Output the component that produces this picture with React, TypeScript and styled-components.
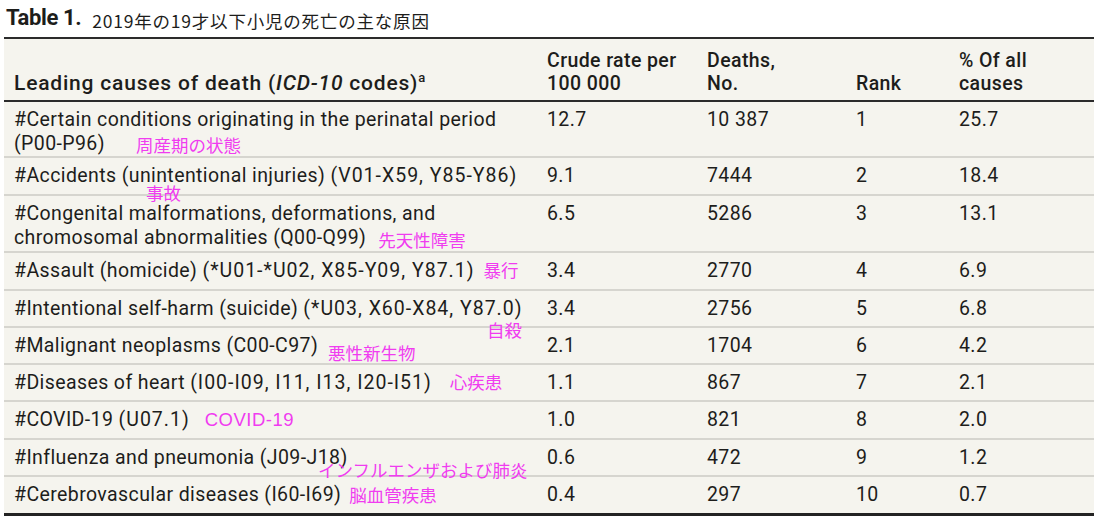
import styled, { createGlobalStyle } from 'styled-components';

const GlobalStyle = createGlobalStyle`
  html, body {
    margin: 0;
    padding: 0;
    background: #ffffff;
  }
  body {
    font-family: Roboto, "Noto Sans CJK JP", sans-serif;
    color: #1d1d1b;
  }
`;

const Page = styled.div`
  width: 1096px;
  height: 519px;
  padding: 0 2px 0 4px;
  box-sizing: border-box;
  overflow: hidden;
`;

const Caption = styled.div`
  display: flex;
  align-items: flex-start;
  gap: 11px;
  height: 37px;
  padding-top: 6px;
  padding-left: 2px;
  box-sizing: border-box;
`;

const CaptionLabel = styled.span`
  font-family: Roboto, sans-serif;
  font-size: 22px;
  line-height: 24px;
  font-weight: 700;
  letter-spacing: -0.4px;
`;

const CaptionText = styled.span`
  margin-top: 3px;
  font-family: "Noto Sans CJK JP", sans-serif;
  font-size: 17.5px;
  line-height: 24px;
  letter-spacing: 0.8px;
`;

const Table = styled.table`
  width: 1090px;
  border-collapse: collapse;
  table-layout: fixed;
  background: #f5f4ee;
  border-top: 2px solid #2b2b2b;
  border-bottom: 3px solid #232323;
  font-size: 19.5px;
  letter-spacing: 0.4px;
`;

const HeadCell = styled.th<{ $w: number; $lead?: boolean }>`
  width: ${p => p.$w}px;
  text-align: left;
  vertical-align: bottom;
  font-weight: 500;
  font-size: ${p => (p.$lead ? 21 : 19.5)}px;
  letter-spacing: ${p => (p.$lead ? 0.8 : 0.4)}px;
  line-height: 23px;
  padding: 10px 10px 5px;
  border-bottom: 2px solid #2b2b2b;
`;

const Row = styled.tr<{ $h: number }>`
  height: ${p => p.$h}px;
  border-top: 2px solid #d6d5cf;

  &:first-child {
    border-top: none;
  }
`;

const Cell = styled.td`
  position: relative;
  vertical-align: top;
  line-height: 23.5px;
  padding: 6px 10px 0;
  white-space: nowrap;
`;

const CodeList = styled.span`
  letter-spacing: 1px;
`;

const Note = styled.span<{ $gap: number; $drop?: number }>`
  display: inline-block;
  margin-left: ${p => p.$gap}px;
  transform: translateY(${p => p.$drop ?? 0}px);
  font-family: "Noto Sans CJK JP", sans-serif;
  font-size: 17.5px;
  line-height: 20px;
  letter-spacing: 0;
  color: #f03cf0;
`;

const LatinNote = styled(Note)`
  font-family: "Liberation Sans", Arial, sans-serif;
  font-size: 18.5px;
  letter-spacing: 0.5px;
`;

const FloatNote = styled.span<{ $left: number; $top: number }>`
  position: absolute;
  left: ${p => p.$left}px;
  top: ${p => p.$top}px;
  font-family: "Noto Sans CJK JP", sans-serif;
  font-size: 17.5px;
  line-height: 20px;
  letter-spacing: 0;
  color: #f03cf0;
  white-space: nowrap;
`;

const Sup = styled.sup`
  font-size: 13px;
  line-height: 0;
  vertical-align: 8px;
`;

interface Cause {
  label: React.ReactNode;
  rate: string;
  deaths: string;
  rank: string;
  share: string;
  h: number;
}

const causes: Cause[] = [
  {
    label: (
      <>
        #Certain conditions originating in the perinatal period
        <br />
        (P00-P96)
        <Note $gap={31} $drop={2}>周産期の状態</Note>
      </>
    ),
    rate: '12.7',
    deaths: '10 387',
    rank: '1',
    share: '25.7',
    h: 56,
  },
  {
    label: (
      <>
        #Accidents (unintentional injuries) <CodeList>(V01-X59, Y85-Y86)</CodeList>
        <FloatNote $left={142} $top={25}>事故</FloatNote>
      </>
    ),
    rate: '9.1',
    deaths: '7444',
    rank: '2',
    share: '18.4',
    h: 38,
  },
  {
    label: (
      <>
        #Congenital malformations, deformations, and
        <br />
        chromosomal abnormalities (Q00-Q99)
        <Note $gap={12} $drop={3}>先天性障害</Note>
      </>
    ),
    rate: '6.5',
    deaths: '5286',
    rank: '3',
    share: '13.1',
    h: 57,
  },
  {
    label: (
      <>
        #Assault (homicide) <CodeList>(*U01-*U02, X85-Y09, Y87.1)</CodeList>
        <Note $gap={9}>暴行</Note>
      </>
    ),
    rate: '3.4',
    deaths: '2770',
    rank: '4',
    share: '6.9',
    h: 38,
  },
  {
    label: (
      <>
        #Intentional self-harm (suicide) <CodeList>(*U03, X60-X84, Y87.0)</CodeList>
        <FloatNote $left={483} $top={29}>自殺</FloatNote>
      </>
    ),
    rate: '3.4',
    deaths: '2756',
    rank: '5',
    share: '6.8',
    h: 37,
  },
  {
    label: (
      <>
        #Malignant neoplasms (C00-C97)
        <Note $gap={10} $drop={8}>悪性新生物</Note>
      </>
    ),
    rate: '2.1',
    deaths: '1704',
    rank: '6',
    share: '4.2',
    h: 37,
  },
  {
    label: (
      <>
        #Diseases of heart <CodeList>(I00-I09, I11, I13, I20-I51)</CodeList>
        <Note $gap={18}>心疾患</Note>
      </>
    ),
    rate: '1.1',
    deaths: '867',
    rank: '7',
    share: '2.1',
    h: 37,
  },
  {
    label: (
      <>
        #COVID-19 <CodeList>(U07.1)</CodeList>
        <LatinNote $gap={15}>COVID-19</LatinNote>
      </>
    ),
    rate: '1.0',
    deaths: '821',
    rank: '8',
    share: '2.0',
    h: 38,
  },
  {
    label: (
      <>
        #Influenza and pneumonia (J09-J18)
        <FloatNote $left={314} $top={20}>インフルエンザおよび肺炎</FloatNote>
      </>
    ),
    rate: '0.6',
    deaths: '472',
    rank: '9',
    share: '1.2',
    h: 37,
  },
  {
    label: (
      <>
        #Cerebrovascular diseases (I60-I69)
        <Note $gap={8} $drop={1}>脳血管疾患</Note>
      </>
    ),
    rate: '0.4',
    deaths: '297',
    rank: '10',
    share: '0.7',
    h: 38,
  },
];

const App = () => {
  return (
    <Page>
      <GlobalStyle />
      <Caption>
        <CaptionLabel>Table 1.</CaptionLabel>
        <CaptionText>2019年の19才以下小児の死亡の主な原因</CaptionText>
      </Caption>
      <Table>
        <thead>
          <tr>
            <HeadCell $w={513} $lead>
              Leading causes of death (<i>ICD-10</i> codes)<Sup>a</Sup>
            </HeadCell>
            <HeadCell $w={140}>
              Crude rate per
              <br />
              100 000
            </HeadCell>
            <HeadCell $w={129}>
              Deaths,
              <br />
              No.
            </HeadCell>
            <HeadCell $w={83}>Rank</HeadCell>
            <HeadCell $w={125}>
              % Of all
              <br />
              causes
            </HeadCell>
          </tr>
        </thead>
        <tbody>
          {causes.map((c, i) => (
            <Row key={i} $h={c.h}>
              <Cell>{c.label}</Cell>
              <Cell>{c.rate}</Cell>
              <Cell>{c.deaths}</Cell>
              <Cell>{c.rank}</Cell>
              <Cell>{c.share}</Cell>
            </Row>
          ))}
        </tbody>
      </Table>
    </Page>
  );
};

export default App;
